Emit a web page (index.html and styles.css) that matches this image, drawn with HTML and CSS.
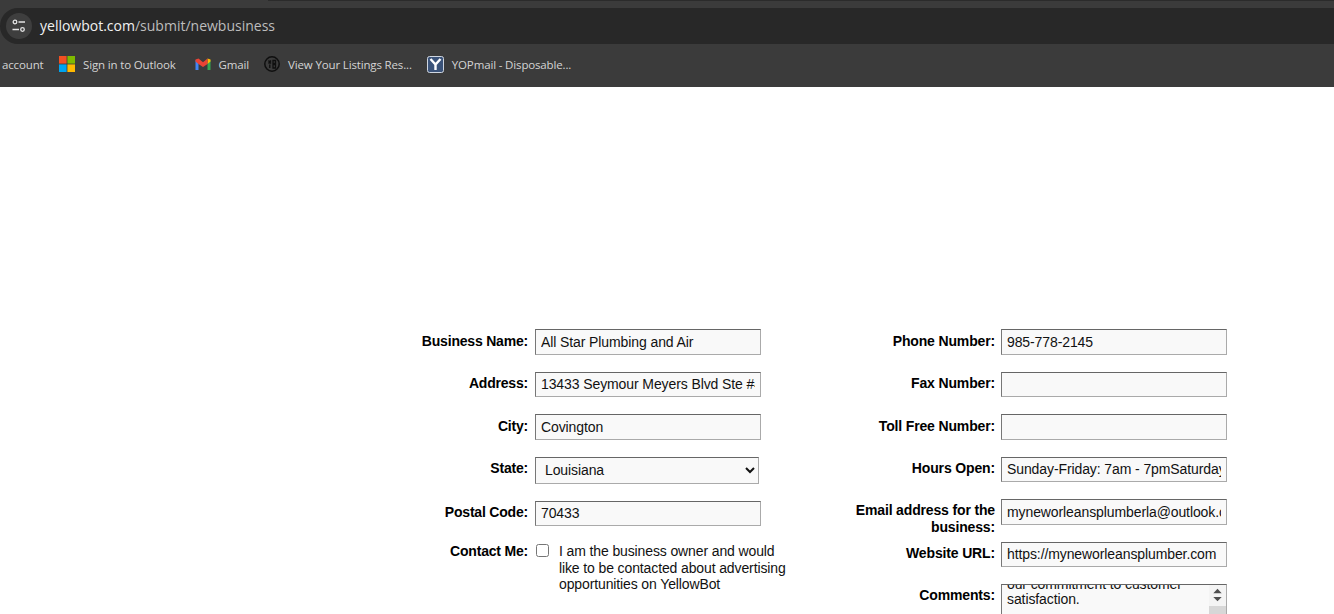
FILE: index.html
```html
<!DOCTYPE html>
<html lang="en">
<head>
<meta charset="utf-8">
<title>yellowbot.com/submit/newbusiness</title>
<link rel="stylesheet" href="styles.css">
</head>
<body>
<header class="chrome">
  <div class="tabstrip"><div class="tab-edge"></div></div>
  <div class="omnibox-row">
    <div class="omnibox">
      <span class="site-info">
        <svg width="14" height="14" viewBox="0 0 14 14" fill="none" stroke="#e3e3e3" stroke-width="1.3"><circle cx="3" cy="3" r="1.8"/><path d="M6.5 3H13M.5 10.5h6.5"/><circle cx="10.5" cy="10.5" r="1.8"/></svg>
      </span>
      <span class="url"><span class="host">yellowbot.com</span>/submit/newbusiness</span>
    </div>
  </div>
  <nav class="bookmarks">
    <span class="bm bm-account">account</span>
    <span class="bm bm-outlook">
      <svg width="16" height="16" viewBox="0 0 16 16"><rect width="7.6" height="7.6" fill="#f25022"/><rect x="8.4" width="7.6" height="7.6" fill="#7fba00"/><rect y="8.4" width="7.6" height="7.6" fill="#00a4ef"/><rect x="8.4" y="8.4" width="7.6" height="7.6" fill="#ffb900"/></svg>
      Sign in to Outlook
    </span>
    <span class="bm bm-gmail">
      <svg width="16" height="16" viewBox="0 0 16 16"><path d="M.5 4V14h3V6.5z" fill="#4285f4"/><path d="M15.5 4V14h-3V6.5z" fill="#34a853"/><path d="M12.5 2.6 15.5 3.4V5.5L12.5 8z" fill="#fbbc04"/><path d="M.5 3.4 3.5 2.6 8 6.2 12.5 2.6V8L8 11 3.5 8 .5 5.5z" fill="#ea4335"/></svg>
      Gmail
    </span>
    <span class="bm bm-listings">
      <svg width="16" height="16" viewBox="0 0 16 16" fill="none" stroke="#0f0f0f"><circle cx="8" cy="8" r="7.2" stroke-width="1.5"/><path d="M4.5 4.5 7 7.5M7 4.5 4.5 7.5M9 4.5h2.5V7.5H9zM5.8 8.5V12M9 8.5h2.5V12H9z" stroke-width="1.3"/></svg>
      View Your Listings Res...
    </span>
    <span class="bm">
      <svg width="17" height="17" viewBox="0 0 17 17"><rect x=".5" y=".5" width="16" height="16" rx="2" fill="#3b5379" stroke="#cfd6e0"/><path d="M3.5 3 8.5 8.5 13.5 3M8.5 8.5V14" fill="none" stroke="#fff" stroke-width="2.4"/></svg>
      YOPmail - Disposable...
    </span>
  </nav>
</header>

<main class="page">
  <form class="biz-form">
    <div class="col">
      <div class="row"><label class="lbl">Business Name:</label><input class="field" value="All Star Plumbing and Air"></div>
      <div class="row"><label class="lbl">Address:</label><input class="field" value="13433 Seymour Meyers Blvd Ste #4"></div>
      <div class="row"><label class="lbl">City:</label><input class="field" value="Covington"></div>
      <div class="row row-state"><label class="lbl">State:</label>
        <select class="field select"><option>Louisiana</option></select></div>
      <div class="row"><label class="lbl">Postal Code:</label><input class="field" value="70433"></div>
      <div class="row row-contact"><label class="lbl">Contact Me:</label>
        <input class="check" type="checkbox">
        <p class="contact-text">I am the business owner and would like to be contacted about advertising opportunities on YellowBot</p>
      </div>
    </div>
    <div class="col">
      <div class="row"><label class="lbl">Phone Number:</label><input class="field" value="985-778-2145"></div>
      <div class="row"><label class="lbl">Fax Number:</label><input class="field"></div>
      <div class="row"><label class="lbl">Toll Free Number:</label><input class="field"></div>
      <div class="row"><label class="lbl">Hours Open:</label><input class="field" value="Sunday-Friday: 7am - 7pmSaturday: Closed"></div>
      <div class="row row-email"><label class="lbl">Email address for the business:</label><input class="field" value="myneworleansplumberla@outlook.com"></div>
      <div class="row"><label class="lbl">Website URL:</label><input class="field" value="https://myneworleansplumber.com"></div>
      <div class="row"><label class="lbl lbl-comments">Comments:</label>
        <div class="comments">
          <textarea class="comments-input" id="comments" rows="6">All Star Plumbing and Air is proud
our commitment to customer
satisfaction.




</textarea>
          <div class="sbar">
            <svg width="17" height="21" viewBox="0 0 17 21" fill="#505050"><path d="M8.5 3.8 12.7 8.3H4.3zM8.5 16.2 4.3 11.9H12.7z"/></svg>
            <div class="sbar-thumb"></div>
          </div>
        </div>
      </div>
    </div>
  </form>
</main>
<script src="script.js"></script>
</body>
</html>
```

FILE: styles.css
```css
* { box-sizing: border-box; }
html, body { margin: 0; height: 100%; overflow: hidden; background: #fff; }
body { font-family: "Liberation Sans", Arial, sans-serif; font-size: 14px; color: #000; }

.chrome { background: #3b3b3b; height: 87px; font-family: "Open Sans", "Noto Sans", sans-serif; }
.tabstrip { height: 8px; padding-left: 268px; }
.tab-edge { height: 1px; background: #2b2b2b; }
.omnibox-row { height: 36px; }
.omnibox { height: 36px; background: #282828; border-radius: 18px 0 0 18px; display: flex; align-items: center; padding-left: 6px; }
.site-info { width: 26px; height: 26px; border-radius: 50%; background: #3e3e3e; display: flex; align-items: center; justify-content: center; margin-right: 8px; }
.url { font-size: 14px; color: #bdbdbd; padding-bottom: 2px; }
.host { color: #f1f1f1; }
.bookmarks { height: 40px; display: flex; align-items: center; padding-left: 2px; color: #d4d4d4; font-size: 11.5px; letter-spacing: -0.15px; }
.bm { display: flex; align-items: center; gap: 8px; margin-right: 18px; white-space: nowrap; }
.bm-account { margin-right: 15.5px; }
.bm-outlook { margin-right: 19px; }
.bm-gmail { margin-right: 15px; }
.bm-listings { margin-right: 15px; }

.page { padding: 242px 0 0 414px; }
.biz-form { display: flex; gap: 26px; }
.col { width: 400px; display: flex; flex-direction: column; }
.row { display: flex; align-items: flex-start; gap: 7px; min-height: 42.5px; }
.row-state { min-height: 44px; }
.lbl { width: 114px; flex: none; text-align: right; font-weight: bold; line-height: 16px; padding-top: 3.5px; letter-spacing: -0.2px; }
.col + .col .lbl { width: 155px; margin-right: -1px; letter-spacing: -0.15px; }
.field { width: 226px; height: 25.5px; border: 1px solid; border-color: #666 #aaa #aaa #777; background: #f9f9f9; padding: 0 5px; font: 14px "Liberation Sans", Arial, sans-serif; letter-spacing: -0.1px; color: #111; border-radius: 0; outline: none; }
.select { width: 224px; height: 27px; padding-left: 5px; }
.row-email .lbl { padding-top: 3px; line-height: 17px; }
.col + .col .lbl-comments { padding-top: 3px; }
.row-contact .lbl { padding-top: 0; }
.check { margin: 1px 0 0 1px; width: 13px; height: 13px; flex: none; }
.contact-text { margin: 0 0 0 3px; width: 235px; line-height: 16.5px; color: #111; letter-spacing: -0.12px; }
.comments { position: relative; width: 226px; height: 80px; flex: none; }
.comments-input { width: 226px; height: 80px; display: block; border: 1px solid; border-color: #666 #aaa #aaa #777; background: #f9f9f9; padding: 2px 5px; font: 14px/15px "Liberation Sans", Arial, sans-serif; letter-spacing: -0.1px; color: #111; resize: none; overflow: hidden; outline: none; }
.sbar { position: absolute; top: 1px; right: 1px; bottom: 1px; width: 17px; background: #f4f4f4; }
.sbar svg { display: block; }
.sbar-thumb { height: 50px; background: #d7d7d7; }
```

FILE: script.js
```js
document.getElementById('comments').scrollTop = 25;
```
